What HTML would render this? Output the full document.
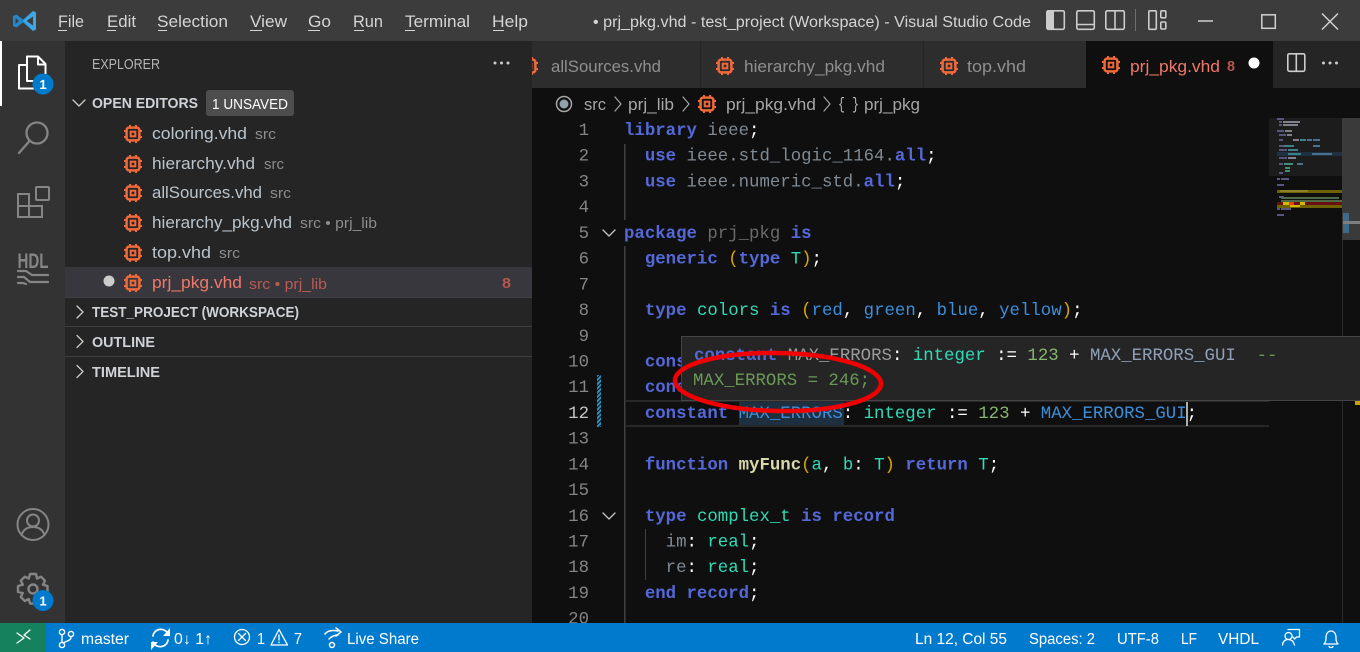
<!DOCTYPE html>
<html lang="en"><head><meta charset="utf-8"><title>prj_pkg.vhd - test_project (Workspace) - Visual Studio Code</title>
<style>
html,body{margin:0;padding:0;width:1360px;height:652px;overflow:hidden;background:#0f0f0f}
svg{display:block}
text{font-family:"Liberation Sans",sans-serif;white-space:pre}
.m{font-size:16.5px;fill:#d4d4d4}
.f{font-size:16.5px;fill:#b9c4cc}
.d{font-size:14.5px;fill:#8c8c8c}
.h{font-size:14.5px;font-weight:bold;fill:#cfd3d8}
.t{font-size:16.5px;fill:#8f8f8f}
.b{font-size:16.5px;fill:#a6a6a6}
.s{font-size:15.5px;fill:#fff}
.c{font-family:"Liberation Mono",monospace;font-size:17.38px;fill:#d4d4d4}
.n{font-family:"Liberation Mono",monospace;font-size:17.38px;fill:#858585;text-anchor:end}
.k{fill:#5568d8;font-weight:bold}.i{fill:#7f8a94}.g{fill:#6a6a6a}.e{fill:#2fdcb8}.p{fill:#d7a800}.v{fill:#3d8fdc}.w{fill:#fff}.o{fill:#86b56c}.q{fill:#6a9955}.y{fill:#d8d8a8;font-weight:bold}
.l{fill:none;stroke-linecap:round;stroke-linejoin:round}
</style></head><body>
<svg width="1360" height="652" viewBox="0 0 1360 652" xmlns="http://www.w3.org/2000/svg">
<defs>
<symbol id="chip" viewBox="0 0 18 18" overflow="visible">
<g fill="none" stroke="#f0693a"><rect x="2.600" y="2.600" width="12.800" height="12.800" rx="2.500" stroke-width="2.500"/><rect x="6.700" y="6.700" width="4.600" height="4.600" stroke-width="2"/><path d="M6 0v2M12 0v2M6 16v2M12 16v2M0 6h2M0 12h2M16 6h2M16 12h2" stroke-width="2"/></g>
</symbol>
<pattern id="st" width="3" height="3" patternUnits="userSpaceOnUse" patternTransform="rotate(45)"><rect width="3" height="3" fill="#0f0f0f"/><rect width="2" height="3" fill="#2a93c4"/></pattern>
</defs>

<!-- panels -->
<rect width="1360" height="652" fill="#0f0f0f"/>
<rect width="1360" height="41" fill="#3c3c3c"/>
<rect y="41" width="65" height="582" fill="#333"/>
<rect x="65" y="41" width="467" height="582" fill="#252526"/>
<rect x="532" y="41" width="828" height="47" fill="#252526"/>
<rect x="532" y="41" width="168" height="47" fill="#2d2d2d"/>
<rect x="701" y="41" width="222" height="47" fill="#2d2d2d"/>
<rect x="924" y="41" width="162" height="47" fill="#2d2d2d"/>
<rect x="1086" y="41" width="187" height="47" fill="#0f0f0f"/>

<!-- title bar -->
<g fill="#0a7cd0"><path d="M33 11 36 12.500V29.500L33 31 23 22.500 16.500 27.500 13 26V16L16.500 14.500 23 19.500Z" fill="#2489ca"/><path d="M36 12.500V29.500L33 31 23 21 33 11Z" fill="#3fa7e6"/><path d="M15.500 18V24L19 21Z" fill="#3c3c3c"/><path d="M33 16.500 26.500 21 33 25.500Z" fill="#3c3c3c"/></g>
<text class="m" x="58" y="27" textLength="26" lengthAdjust="spacingAndGlyphs">File</text>
<text class="m" x="107" y="27" textLength="29" lengthAdjust="spacingAndGlyphs">Edit</text>
<text class="m" x="157" y="27" textLength="71" lengthAdjust="spacingAndGlyphs">Selection</text>
<text class="m" x="250" y="27" textLength="37" lengthAdjust="spacingAndGlyphs">View</text>
<text class="m" x="308" y="27" textLength="23" lengthAdjust="spacingAndGlyphs">Go</text>
<text class="m" x="353" y="27" textLength="30" lengthAdjust="spacingAndGlyphs">Run</text>
<text class="m" x="405" y="27" textLength="65" lengthAdjust="spacingAndGlyphs">Terminal</text>
<text class="m" x="492" y="27" textLength="36" lengthAdjust="spacingAndGlyphs">Help</text>
<g fill="#d4d4d4"><rect x="58" y="30" width="9" height="1"/><rect x="107" y="30" width="9" height="1"/><rect x="158" y="30" width="9" height="1"/><rect x="250" y="30" width="12" height="1"/><rect x="308" y="30" width="12" height="1"/><rect x="354" y="30" width="10" height="1"/><rect x="405" y="30" width="10" height="1"/><rect x="493" y="30" width="11" height="1"/></g>
<text class="m" x="593" y="27" textLength="438" lengthAdjust="spacingAndGlyphs" style="font-size:15.5px">• prj_pkg.vhd - test_project (Workspace) - Visual Studio Code</text>
<g fill="none" stroke="#cccccc" stroke-width="1.600">
<rect x="1046.800" y="10.800" width="17.500" height="18.500" rx="1.500"/><rect x="1076.800" y="10.800" width="17.500" height="18.500" rx="1.500"/><path d="M1077 24.500h17"/><rect x="1105.800" y="10.800" width="18.500" height="18.500" rx="1.500"/><path d="M1115 11v18"/>
<rect x="1148.800" y="10.800" width="7.500" height="18.500" rx="1"/><rect x="1160.800" y="10.800" width="5" height="7" rx="1"/><rect x="1160.800" y="22" width="5" height="7" rx="1"/>
</g>
<rect x="1047" y="11" width="7" height="18" fill="#ccc"/>
<rect x="1135" y="9" width="1" height="22" fill="#6e6e6e"/>
<g fill="none" stroke="#d0d0d0" stroke-width="1.500"><path d="M1198 21h15"/><rect x="1261.800" y="14.800" width="13.500" height="13.500"/><path d="M1322 13.500 1338 29.500M1338 13.500 1322 29.500"/></g>

<!-- activity bar -->
<rect y="41" width="2" height="65" fill="#fff"/>
<g class="l" stroke="#fff" stroke-width="2"><path d="M27 56.500H38L45.500 64V81H27Z"/><path d="M38 57v7.500h7"/><path d="M27 65H19V88.500H36V81"/></g>
<circle cx="43" cy="84" r="10.500" fill="#007acc"/>
<text x="43" y="89" text-anchor="middle" style="font-size:13px;font-weight:bold;fill:#fff">1</text>
<g class="l" stroke="#858585" stroke-width="2.300"><circle cx="37" cy="133" r="10.500"/><path d="M29.500 141 19 153"/></g>
<g fill="none" stroke="#858585" stroke-width="2"><path d="M18 194H29V217H18ZM18 206H42V217H29V194"/><rect x="36" y="187" width="13" height="13" rx="1"/></g>
<text x="33" y="268" text-anchor="middle" textLength="31" lengthAdjust="spacingAndGlyphs" style="font-size:21px;font-weight:bold;fill:#858585">HDL</text>
<g class="l" stroke="#858585" stroke-width="2.200"><path d="M18 271h8l6 4h16M18 277h6l6 5h18M18 283h5l3 1"/></g>
<g class="l" stroke="#858585" stroke-width="2"><circle cx="33" cy="524.500" r="15.500"/><circle cx="33" cy="520.500" r="6"/><path d="M21.500 535c2-6 6-8 11.500-8s9.500 2 11.500 8"/></g>
<g fill="none" stroke="#858585" stroke-width="2.400" stroke-linejoin="round"><path d="M30 574h6l1 4.500 4-1.800 4 4-2 4 4.500 1.300v6l-4.500 1 2 4-4 4-4-2-1 4.500h-6l-1.200-4.500-4 2-4-4 2-4-4.800-1v-6l4.800-1.300-2-4 4-4 4 1.800z"/><circle cx="33" cy="589" r="4.500"/></g>
<circle cx="43" cy="600.500" r="10.500" fill="#007acc"/>
<text x="43" y="605.500" text-anchor="middle" style="font-size:13px;font-weight:bold;fill:#fff">1</text>

<!-- sidebar -->
<text class="d" x="92" y="69" textLength="68" lengthAdjust="spacingAndGlyphs" style="font-size:15px;fill:#b4b4b4">EXPLORER</text>
<g fill="#ccc"><circle cx="495" cy="63" r="1.500"/><circle cx="501.500" cy="63" r="1.500"/><circle cx="508" cy="63" r="1.500"/></g>
<path class="l" d="M73 100l6 6 6-6" stroke="#ccc" stroke-width="1.300"/>
<text class="h" x="92" y="108" textLength="106" lengthAdjust="spacingAndGlyphs">OPEN EDITORS</text>
<rect x="206" y="90" width="88" height="26" rx="3" fill="#4d4d4d"/>
<text x="212" y="109" textLength="76" lengthAdjust="spacingAndGlyphs" style="font-size:14.5px;fill:#fff">1 UNSAVED</text>

<use href="#chip" x="124" y="125" width="18" height="18"/>
<text class="f" x="152" y="139" textLength="95" lengthAdjust="spacingAndGlyphs">coloring.vhd</text>
<text class="d" x="255" y="139" textLength="21" lengthAdjust="spacingAndGlyphs">src</text>
<use href="#chip" x="124" y="155" width="18" height="18"/>
<text class="f" x="152" y="169" textLength="103" lengthAdjust="spacingAndGlyphs">hierarchy.vhd</text>
<text class="d" x="264" y="169" textLength="20" lengthAdjust="spacingAndGlyphs">src</text>
<use href="#chip" x="124" y="184" width="18" height="18"/>
<text class="f" x="152" y="198" textLength="110" lengthAdjust="spacingAndGlyphs">allSources.vhd</text>
<text class="d" x="270" y="198" textLength="21" lengthAdjust="spacingAndGlyphs">src</text>
<use href="#chip" x="124" y="214" width="18" height="18"/>
<text class="f" x="152" y="228" textLength="140" lengthAdjust="spacingAndGlyphs">hierarchy_pkg.vhd</text>
<text class="d" x="300" y="228" textLength="77" lengthAdjust="spacingAndGlyphs">src • prj_lib</text>
<use href="#chip" x="124" y="244" width="18" height="18"/>
<text class="f" x="152" y="258" textLength="59" lengthAdjust="spacingAndGlyphs">top.vhd</text>
<text class="d" x="219" y="258" textLength="21" lengthAdjust="spacingAndGlyphs">src</text>
<rect x="65" y="267" width="467" height="30" fill="#37373d"/>
<circle cx="109" cy="281" r="5.500" fill="#ccc"/>
<use href="#chip" x="124" y="274" width="18" height="18"/>
<text x="152" y="288" textLength="90" lengthAdjust="spacingAndGlyphs" style="font-size:16.5px;fill:#f0796a">prj_pkg.vhd</text>
<text x="249" y="289" textLength="78" lengthAdjust="spacingAndGlyphs" style="font-size:14.5px;fill:#bc5b53">src • prj_lib</text>
<text x="502" y="288" textLength="9" lengthAdjust="spacingAndGlyphs" style="font-size:15px;font-weight:bold;fill:#b4574f">8</text>

<g fill="#3f3f40"><rect x="65" y="297" width="467" height="1"/><rect x="65" y="326" width="467" height="1"/><rect x="65" y="356" width="467" height="1"/></g>
<g class="l" stroke="#ccc" stroke-width="1.300"><path d="M77 306l6 6-6 6M77 335.500l6 6-6 6M77 365.500l6 6-6 6"/></g>
<text class="h" x="92" y="317" textLength="207" lengthAdjust="spacingAndGlyphs">TEST_PROJECT (WORKSPACE)</text>
<text class="h" x="92" y="347" textLength="63" lengthAdjust="spacingAndGlyphs">OUTLINE</text>
<text class="h" x="92" y="377" textLength="68" lengthAdjust="spacingAndGlyphs">TIMELINE</text>

<!-- tabs -->
<use href="#chip" x="520" y="57" width="18" height="18" style="clip-path:inset(0 0 0 12px)"/>
<text class="t" x="551" y="72" textLength="110" lengthAdjust="spacingAndGlyphs">allSources.vhd</text>
<use href="#chip" x="716" y="57" width="18" height="18"/>
<text class="t" x="744" y="72" textLength="141" lengthAdjust="spacingAndGlyphs">hierarchy_pkg.vhd</text>
<use href="#chip" x="940" y="57" width="18" height="18"/>
<text class="t" x="967" y="72" textLength="59" lengthAdjust="spacingAndGlyphs">top.vhd</text>
<use href="#chip" x="1102" y="56" width="18" height="18"/>
<text x="1130" y="72" textLength="90" lengthAdjust="spacingAndGlyphs" style="font-size:16.5px;fill:#f0796a">prj_pkg.vhd</text>
<text x="1227" y="71" textLength="8" lengthAdjust="spacingAndGlyphs" style="font-size:15px;font-weight:bold;fill:#b4574f">8</text>
<circle cx="1254" cy="63" r="5.500" fill="#fff"/>
<g fill="none" stroke="#ccc" stroke-width="1.600"><rect x="1287.800" y="53.800" width="17" height="17.500" rx="1.500"/><path d="M1296.300 54v17"/></g>
<g fill="#ccc"><circle cx="1323.500" cy="63" r="1.500"/><circle cx="1330" cy="63" r="1.500"/><circle cx="1336.500" cy="63" r="1.500"/></g>

<!-- breadcrumbs -->
<circle cx="564" cy="104" r="7.500" fill="none" stroke="#a6a6a6" stroke-width="1.500"/><circle cx="564" cy="104" r="4.500" fill="#8fa3ad"/>
<text class="b" x="584" y="110" textLength="22" lengthAdjust="spacingAndGlyphs">src</text>
<text class="b" x="628" y="110" textLength="46" lengthAdjust="spacingAndGlyphs">prj_lib</text>
<use href="#chip" x="698" y="95" width="18" height="18"/>
<text class="b" x="726" y="110" textLength="90" lengthAdjust="spacingAndGlyphs">prj_pkg.vhd</text>
<g class="l" stroke="#a6a6a6" stroke-width="1.200"><path d="M615 97l6 7-6 7M683 97l6 7-6 7M824 97l6 7-6 7"/></g>
<text x="838" y="109" textLength="21" lengthAdjust="spacingAndGlyphs" style="font-size:17px;fill:#bcbcbc;font-family:'Liberation Mono',monospace">{ }</text>
<text class="b" x="864" y="110" textLength="56" lengthAdjust="spacingAndGlyphs">prj_pkg</text>

<!-- code decorations -->
<g fill="#404040"><rect x="624" y="144" width="1.500" height="76"/><rect x="624" y="246" width="1.500" height="377"/><rect x="645" y="529" width="1" height="51"/></g>
<rect x="626" y="400" width="643" height="2" fill="#282828"/>
<rect x="626" y="425" width="643" height="2" fill="#282828"/>
<rect x="739" y="402" width="105" height="23" fill="#1e3040"/>
<rect x="597" y="375" width="4" height="52" fill="url(#st)"/>
<g class="l" stroke="#c5c5c5" stroke-width="1.300"><path d="M603 230l6 6 6-6M603 513l6 6 6-6"/></g>

<g transform="translate(0,-1)">
<!-- line numbers -->
<text class="n" x="589" y="136">1</text>
<text class="n" x="589" y="161.700">2</text>
<text class="n" x="589" y="187.400">3</text>
<text class="n" x="589" y="213.200">4</text>
<text class="n" x="589" y="238.900">5</text>
<text class="n" x="589" y="264.600">6</text>
<text class="n" x="589" y="290.300">7</text>
<text class="n" x="589" y="316">8</text>
<text class="n" x="589" y="341.800">9</text>
<text class="n" x="589" y="367.500">10</text>
<text class="n" x="589" y="393.200">11</text>
<text class="n" x="589" y="418.900" style="fill:#c6c6c6">12</text>
<text class="n" x="589" y="444.600">13</text>
<text class="n" x="589" y="470.400">14</text>
<text class="n" x="589" y="496.100">15</text>
<text class="n" x="589" y="521.800">16</text>
<text class="n" x="589" y="547.500">17</text>
<text class="n" x="589" y="573.200">18</text>
<text class="n" x="589" y="599">19</text>
<text class="n" x="589" y="624.700">20</text>

<!-- code -->
<text class="c" x="624" y="136"><tspan class="k">library</tspan><tspan class="i"> ieee</tspan><tspan class="w">;</tspan></text>
<text class="c" x="624" y="161.700">  <tspan class="k">use</tspan><tspan class="i"> ieee.std_logic_1164.</tspan><tspan class="k">all</tspan><tspan class="w">;</tspan></text>
<text class="c" x="624" y="187.400">  <tspan class="k">use</tspan><tspan class="i"> ieee.numeric_std.</tspan><tspan class="k">all</tspan><tspan class="w">;</tspan></text>
<text class="c" x="624" y="238.900"><tspan class="k">package</tspan><tspan class="g"> prj_pkg </tspan><tspan class="k">is</tspan></text>
<text class="c" x="624" y="264.600">  <tspan class="k">generic</tspan> <tspan class="p">(</tspan><tspan class="k">type</tspan> <tspan class="e">T</tspan><tspan class="p">)</tspan><tspan class="w">;</tspan></text>
<text class="c" x="624" y="316">  <tspan class="k">type</tspan> <tspan class="e">colors</tspan> <tspan class="k">is</tspan> <tspan class="p">(</tspan><tspan class="v">red</tspan><tspan class="w">,</tspan> <tspan class="v">green</tspan><tspan class="w">,</tspan> <tspan class="v">blue</tspan><tspan class="w">,</tspan> <tspan class="v">yellow</tspan><tspan class="p">)</tspan><tspan class="w">;</tspan></text>
<text class="c" x="624" y="367.500">  <tspan class="k">constant</tspan></text>
<text class="c" x="624" y="393.200">  <tspan class="k">constant</tspan></text>
<text class="c" x="624" y="418.900">  <tspan class="k">constant</tspan> <tspan class="v">MAX_ERRORS</tspan><tspan class="w">:</tspan> <tspan class="e">integer</tspan> <tspan class="w">:=</tspan> <tspan class="o">123</tspan> <tspan class="w">+</tspan> <tspan class="v">MAX_ERRORS_GUI</tspan><tspan class="w">;</tspan></text>
<text class="c" x="624" y="470.400">  <tspan class="k">function</tspan> <tspan class="y">myFunc</tspan><tspan class="p">(</tspan><tspan class="e">a</tspan><tspan class="w">,</tspan> <tspan class="e">b</tspan><tspan class="w">:</tspan> <tspan class="e">T</tspan><tspan class="p">)</tspan> <tspan class="k">return</tspan> <tspan class="e">T</tspan><tspan class="w">;</tspan></text>
<text class="c" x="624" y="521.800">  <tspan class="k">type</tspan> <tspan class="e">complex_t</tspan> <tspan class="k">is record</tspan></text>
<text class="c" x="624" y="547.500">    <tspan class="i">im</tspan><tspan class="w">:</tspan> <tspan class="e">real</tspan><tspan class="w">;</tspan></text>
<text class="c" x="624" y="573.200">    <tspan class="i">re</tspan><tspan class="w">:</tspan> <tspan class="e">real</tspan><tspan class="w">;</tspan></text>
<text class="c" x="624" y="599">  <tspan class="k">end record</tspan><tspan class="w">;</tspan></text>
</g>
<rect x="1186" y="402" width="2" height="24" fill="#aeafad"/>

<!-- minimap -->
<rect x="1269" y="118" width="73" height="58" fill="#1c1c1c"/>
<g fill="#56567e"><rect x="1277" y="118" width="7" height="2"/><rect x="1279" y="121" width="3" height="2"/><rect x="1279" y="124" width="3" height="2"/><rect x="1277" y="130" width="7" height="2"/><rect x="1279" y="134" width="7" height="2"/><rect x="1279" y="139" width="4" height="2"/><rect x="1279" y="145" width="8" height="2"/><rect x="1279" y="149" width="8" height="2"/><rect x="1279" y="157" width="8" height="2"/><rect x="1279" y="163" width="4" height="2"/><rect x="1279" y="172" width="4" height="2"/><rect x="1277" y="178" width="3" height="2"/><rect x="1281" y="178" width="8" height="2"/><rect x="1277" y="184" width="7" height="2"/><rect x="1277" y="208" width="3" height="2"/><rect x="1281" y="208" width="10" height="2"/><rect x="1277" y="214" width="7" height="2"/></g>
<g fill="#808088"><rect x="1283" y="121" width="17" height="2"/><rect x="1283" y="124" width="15" height="2"/><rect x="1285" y="130" width="7" height="2"/><rect x="1287" y="134" width="5" height="2"/><rect x="1293" y="139" width="6" height="2"/><rect x="1288" y="157" width="8" height="2"/></g>
<rect x="1277" y="152" width="65" height="4" fill="#1f3040"/>
<g fill="#3f7f88"><rect x="1284" y="145" width="10" height="2"/><rect x="1288" y="149" width="10" height="2"/><rect x="1288" y="153" width="10" height="2"/><rect x="1293" y="153" width="8" height="2"/><rect x="1300" y="139" width="6" height="2"/></g>
<g fill="#428c7a"><rect x="1284" y="163" width="9" height="2"/><rect x="1285" y="167" width="5" height="2"/><rect x="1285" y="170" width="5" height="2"/></g>
<g fill="#4a7290"><rect x="1307" y="139" width="5" height="2"/><rect x="1313" y="139" width="7" height="2"/><rect x="1313" y="145" width="7" height="2"/><rect x="1312" y="153" width="20" height="2"/><rect x="1297" y="163" width="6" height="2"/></g>
<rect x="1277" y="190" width="65" height="3" fill="#6e6200"/>
<rect x="1280" y="190" width="28" height="2" fill="#8c8028"/>
<rect x="1279" y="196" width="5" height="2" fill="#555b7d"/>
<g fill="#4e6b48"><rect x="1281" y="197" width="58" height="2"/><rect x="1281" y="200" width="61" height="2"/></g>
<rect x="1277" y="202" width="65" height="4" fill="#6b1010"/>
<rect x="1277" y="205" width="65" height="3" fill="#6e6200"/>
<g fill="#d4b900"><rect x="1283" y="202" width="6" height="3"/><rect x="1300" y="202" width="5" height="3"/><rect x="1290" y="205" width="10" height="2"/></g>
<rect x="1289" y="202" width="5" height="3" fill="#e8430f"/>

<!-- scrollbar -->
<rect x="1342" y="118" width="18" height="122" fill="#3a3a3a"/>
<rect x="1342" y="240" width="1" height="383" fill="#2c2c2c"/>
<rect x="1343" y="213" width="6" height="20" fill="#3e6c88"/>
<rect x="1343" y="221" width="17" height="3" fill="#7e7e7e"/>
<rect x="1355" y="401" width="5" height="4" fill="#c9a000"/>

<!-- hover -->
<rect x="681.500" y="336.500" width="679" height="64" fill="#252526" stroke="#454545"/>
<text class="c" x="694" y="360"><tspan class="k">constant</tspan> <tspan style="fill:#9b9b9b">MAX_ERRORS</tspan><tspan class="w">:</tspan> <tspan class="e">integer</tspan> <tspan class="w">:=</tspan> <tspan class="o">123</tspan> <tspan class="w">+</tspan> <tspan style="fill:#8fa0b8">MAX_ERRORS_GUI</tspan>  <tspan class="q">--</tspan></text>
<text class="c q" x="693" y="385">MAX_ERRORS = 246;</text>

<!-- red ellipse -->
<ellipse cx="778" cy="382" rx="103" ry="29" fill="none" stroke="#f00000" stroke-width="4.500" transform="rotate(1 778 382)"/>

<!-- status bar -->
<rect y="623" width="1360" height="29" fill="#007acc"/>
<rect y="623" width="46" height="29" fill="#16825d"/>
<g class="l" stroke="#fff" stroke-width="1.300"><path d="M17 633l7 5-7 5M30 630l-6 5 6 4" /></g>
<g class="l" stroke="#fff" stroke-width="1.400"><circle cx="62" cy="632" r="2.600"/><circle cx="62" cy="645" r="2.600"/><circle cx="71" cy="634" r="2.600"/><path d="M62 635v7M71 637c0 4-5 4-8 6"/></g>
<text class="s" x="81" y="644" textLength="48" lengthAdjust="spacingAndGlyphs">master</text>
<g class="l" stroke="#fff" stroke-width="1.700"><path d="M153 636c1-8 12-9 15-2M168 640c-1 8-12 9-15 2"/></g>
<path d="M170 628v8h-7zM151 650v-8h7z" fill="#fff"/>
<text class="s" x="174" y="644" textLength="38" lengthAdjust="spacingAndGlyphs">0↓ 1↑</text>
<g class="l" stroke="#fff" stroke-width="1.300"><circle cx="242" cy="637" r="7.500"/><path d="M238.500 633.500l7 7M245.500 633.500l-7 7"/><path d="M279 629.500 287.500 645H271Z"/><path d="M279 635v5M279 642v.6"/></g>
<text class="s" x="257" y="644" textLength="8" lengthAdjust="spacingAndGlyphs">1</text>
<text class="s" x="294" y="644" textLength="8" lengthAdjust="spacingAndGlyphs">7</text>
<g class="l" stroke="#fff" stroke-width="1.500"><path d="M325 634c3-4 8-4 13-3M329 639c3-3 6-4 9-4M336 628l5 4-5 4"/><circle cx="332" cy="645" r="2.500"/></g>
<text class="s" x="347" y="644" textLength="72" lengthAdjust="spacingAndGlyphs">Live Share</text>
<text class="s" x="915" y="644" textLength="92" lengthAdjust="spacingAndGlyphs">Ln 12, Col 55</text>
<text class="s" x="1029" y="644" textLength="66" lengthAdjust="spacingAndGlyphs">Spaces: 2</text>
<text class="s" x="1117" y="644" textLength="42" lengthAdjust="spacingAndGlyphs">UTF-8</text>
<text class="s" x="1181" y="644" textLength="16" lengthAdjust="spacingAndGlyphs">LF</text>
<text class="s" x="1218" y="644" textLength="41" lengthAdjust="spacingAndGlyphs">VHDL</text>
<g class="l" stroke="#fff" stroke-width="1.300"><circle cx="1288.500" cy="636" r="3.500"/><path d="M1282.500 645c.5-4 3-5.500 6-5.500s5 1.500 6 5.500M1288 629.500h11.500v7.500h-3l-2 2-1.500-2"/><path d="M1329 646.500c1 1.500 3 1.500 4 0M1324 644h14c-2-2-2-4-2-7s-2-6-5-6-5 3-5 6 0 5-2 7z"/></g>
</svg>
</body></html>
